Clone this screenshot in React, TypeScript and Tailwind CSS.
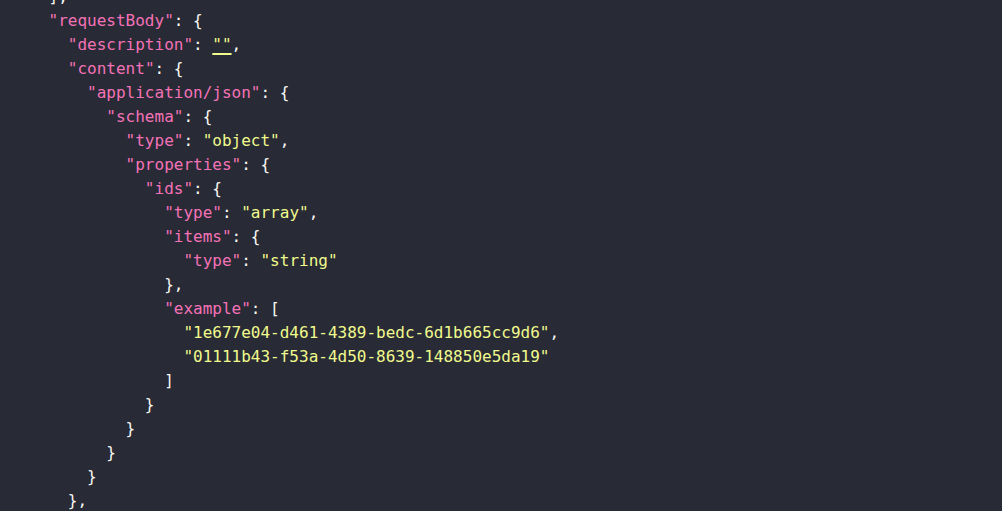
const lines: [number, string, string, string][] = [
  // indent, key, separator/punct, value
  [4, "", "],", ""],
  [4, "requestBody", ": {", ""],
  [6, "description", ": ", "EMPTY"],
  [6, "content", ": {", ""],
  [8, "application/json", ": {", ""],
  [10, "schema", ": {", ""],
  [12, "type", ": ", "object,"],
  [12, "properties", ": {", ""],
  [14, "ids", ": {", ""],
  [16, "type", ": ", "array,"],
  [16, "items", ": {", ""],
  [18, "type", ": ", "string"],
  [16, "", "},", ""],
  [16, "example", ": [", ""],
  [18, "", "", "1e677e04-d461-4389-bedc-6d1b665cc9d6,"],
  [18, "", "", "01111b43-f53a-4d50-8639-148850e5da19"],
  [16, "", "]", ""],
  [14, "", "}", ""],
  [12, "", "}", ""],
  [10, "", "}", ""],
  [8, "", "}", ""],
  [6, "", "},", ""],
];

function Value({ v }: { v: string }) {
  if (!v) return null;
  if (v === "EMPTY")
    return (
      <>
        <span className="text-[#f1fa8c] underline decoration-2 decoration-[#f1fa8c] underline-offset-[3px]">""</span>
        <span className="text-[#f8f8f2]">,</span>
      </>
    );
  const comma = v.endsWith(",");
  const s = comma ? v.slice(0, -1) : v;
  return (
    <>
      <span className="text-[#f1fa8c]">"{s}"</span>
      {comma && <span className="text-[#f8f8f2]">,</span>}
    </>
  );
}

export default function App() {
  return (
    <div className="h-screen w-full overflow-hidden bg-[#282a36]">
      <pre className="-mt-[15px] pl-[10px] font-['DejaVu_Sans_Mono',monospace] text-base leading-6 text-[#f8f8f2]">
        {lines.map(([indent, key, punct, value], i) => (
          <div key={i}>
            {" ".repeat(indent)}
            {key && <span className="text-[#f472b6]">"{key}"</span>}
            {punct && <span className="text-[#f8f8f2]">{punct}</span>}
            <Value v={value} />
          </div>
        ))}
      </pre>
    </div>
  );
}
